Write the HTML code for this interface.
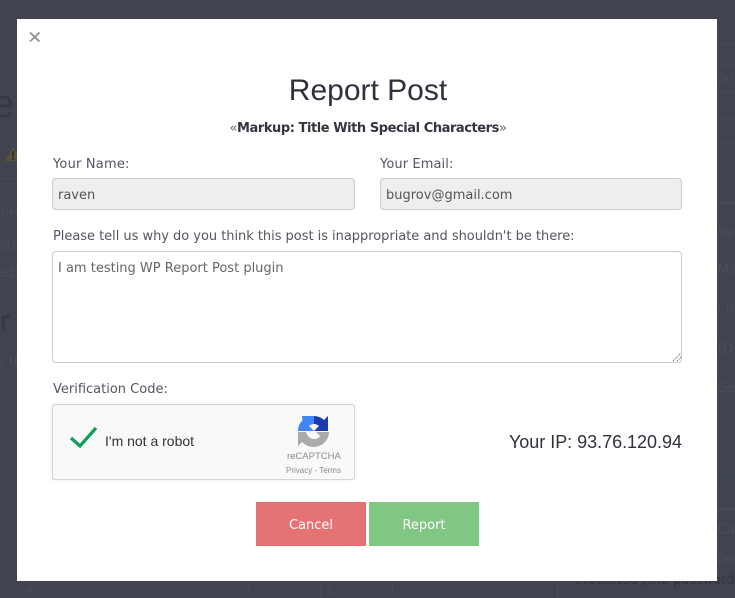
<!DOCTYPE html>
<html><head><meta charset="utf-8">
<style>
html,body{margin:0;padding:0}
body{width:735px;height:598px;overflow:hidden;background:#41444e;position:relative;font-family:"DejaVu Sans","Liberation Sans",sans-serif;}
.a{position:absolute;white-space:nowrap;line-height:1}
.bg{color:#4a4d57;font-size:14px}
.line{position:absolute;height:1px;background:#484b55}
#m{position:absolute;left:17px;top:19px;width:700px;height:562px;background:#fff}
.lb{font-size:13px;color:#53565e}
.inp{position:absolute;box-sizing:border-box;background:#eee;border:1px solid #ccc;border-radius:4px}
.val{font-size:13px;color:#555}
.btn{position:absolute;top:502px;width:110px;height:44px;color:#fff;font-size:13px;line-height:47px;text-align:center}
</style></head><body>
<div class="a" style="left:-8px;top:84px;font-size:40px;font-family:'Liberation Sans',sans-serif;color:#353842">e</div>
<div class="a bg" style="left:0;top:206px">ne</div>
<div class="a bg" style="left:-3px;top:240px">titl</div>
<div class="a bg" style="left:-3px;top:266px">edi</div>
<div class="a" style="left:0;top:307px;font-size:30px;color:#353842;font-family:'Liberation Sans',sans-serif">r</div>
<div class="a bg" style="left:-3px;top:354px">s us</div>
<svg class="a" style="left:5px;top:146px" width="12" height="16"><path d="M0 15L8 1L16 15Z" fill="#5a5138"/><rect x="7" y="5" width="2" height="6" fill="#33343a"/><rect x="7" y="12" width="2" height="2" fill="#33343a"/></svg>
<div class="line" style="left:0;top:178px;width:17px"></div>
<div class="line" style="left:717px;top:44px;width:18px"></div>
<div class="line" style="left:717px;top:65px;width:18px"></div>
<div class="line" style="left:717px;top:92px;width:18px"></div>
<div class="line" style="left:717px;top:118px;width:18px"></div>
<div class="line" style="left:717px;top:142px;width:18px"></div>
<div class="line" style="left:717px;top:202px;width:18px;height:2px"></div>
<div class="a bg" style="left:717px;top:72px">on</div>
<div class="a bg" style="left:717px;top:225px">Spe</div>
<div class="a bg" style="left:717px;top:263px">Ma</div>
<div class="a bg" style="left:717px;top:303px">l In</div>
<div class="a bg" style="left:717px;top:342px">(De</div>
<div class="a bg" style="left:717px;top:381px">Ge</div>
<div class="a" style="left:717px;top:462px;font-size:30px;color:#394650;font-family:'Liberation Sans',sans-serif">m</div>
<div class="line" style="left:717px;top:508px;width:18px;height:3px"></div>
<div class="a bg" style="left:717px;top:523px">Cas</div>
<div class="a bg" style="left:717px;top:553px">tec</div>
<div class="a bg" style="left:576px;top:574px;font-size:13px;color:#30333c">Protected (the password</div>
<div class="a bg" style="left:245px;top:583px;font-size:12px">1</div>
<div class="a bg" style="left:326px;top:583px;font-size:12px">2</div>
<div class="a bg" style="left:391px;top:583px;font-size:12px">[</div>
<div class="a bg" style="left:26px;top:583px;font-size:12px">v</div>
<div class="line" style="left:321px;top:581px;width:1px;height:17px"></div>
<div class="line" style="left:557px;top:581px;width:1px;height:17px"></div>
<div id="m"></div>
<svg class="a" style="left:29px;top:31px" width="12" height="12"><path d="M1 1.500L10.500 10.500M10.500 1.500L1 10.500" stroke="#8d8f94" stroke-width="1.700" fill="none"/></svg>
<div class="a" style="left:18px;width:700px;top:76px;text-align:center;font-family:'Liberation Sans',sans-serif;font-size:30px;color:#2f323c">Report Post</div>
<div class="a" style="left:17px;width:702px;top:122px;text-align:center;font-size:13px;font-weight:bold;color:#33363f;letter-spacing:-.44px"><span style="font-weight:normal;color:#666">«</span>Markup: Title With Special Characters<span style="font-weight:normal;color:#666">»</span></div>
<div class="a lb" style="left:53px;top:158px;letter-spacing:.2px">Your Name:</div>
<div class="a lb" style="left:380px;top:158px;letter-spacing:.1px">Your Email:</div>
<div class="inp" style="left:52px;top:178px;width:303px;height:32px"></div>
<div class="inp" style="left:380px;top:178px;width:302px;height:32px"></div>
<div class="a val" style="left:58px;top:189px">raven</div>
<div class="a val" style="left:386px;top:189px">bugrov@gmail.com</div>
<div class="a lb" style="left:53px;top:230px;letter-spacing:-.03px">Please tell us why do you think this post is inappropriate and shouldn't be there:</div>
<div class="inp" style="left:52px;top:251px;width:630px;height:112px;background:#fff"></div>
<div class="a val" style="left:58px;top:262px;color:#666">I am testing WP Report Post plugin</div>
<svg class="a" style="left:672px;top:352px" width="10" height="10"><path d="M1 9L9 1M5 9L9 5" stroke="#666" stroke-width="1" stroke-dasharray="1.200 1" fill="none"/></svg>
<div class="a lb" style="left:53px;top:383px">Verification Code:</div>
<div class="a" style="left:52px;top:404px;width:303px;height:76px;box-sizing:border-box;background:#f9f9f9;border:1px solid #d3d3d3;border-radius:3px;box-shadow:0 0 4px rgba(0,0,0,.08)"></div>
<svg class="a" style="left:68px;top:425px" width="32" height="26"><path d="M3 13L12 21L28 3" stroke="#0f9d58" stroke-width="3.200" fill="none"/></svg>
<div class="a" style="left:105px;top:434px;font-family:'Liberation Sans',sans-serif;font-size:14px;color:#333">I'm not a robot</div>
<svg class="a" style="left:298px;top:416px" width="32" height="32" viewBox="0 0 32 32">
<path d="M16 0C20 0 24 2 26 4L30 0L30 15L16 15L21 10C19 8.500 18 8 16 8Z" fill="#1c3aa9"/>
<path d="M0 15C0 11 1.500 7 4.500 4.500L4 0L16 0L16 8C14 8 12 9 11 10L16 15Z" fill="#4285f4"/>
<path d="M0 16L8 16C9 20 12 23 16 23C19 23 21 22 22 20L18 16L31 16C31 24 24 31 16 31C11 31 7 29 4 26L0 30Z" fill="#ababab"/>
</svg>
<div class="a" style="left:287px;top:452px;font-family:'Liberation Sans',sans-serif;font-size:9.500px;color:#8a8a8a">reCAPTCHA</div>
<div class="a" style="left:286px;top:467px;font-family:'Liberation Sans',sans-serif;font-size:8px;color:#8a8a8a">Privacy - Terms</div>
<div class="a" style="right:53px;top:433px;font-family:'Liberation Sans',sans-serif;font-size:18px;letter-spacing:-.02px;color:#2f323c">Your IP: 93.76.120.94</div>
<div class="btn" style="left:256px;background:#e57373">Cancel</div>
<div class="btn" style="left:369px;background:#81c784">Report</div>
</body></html>
